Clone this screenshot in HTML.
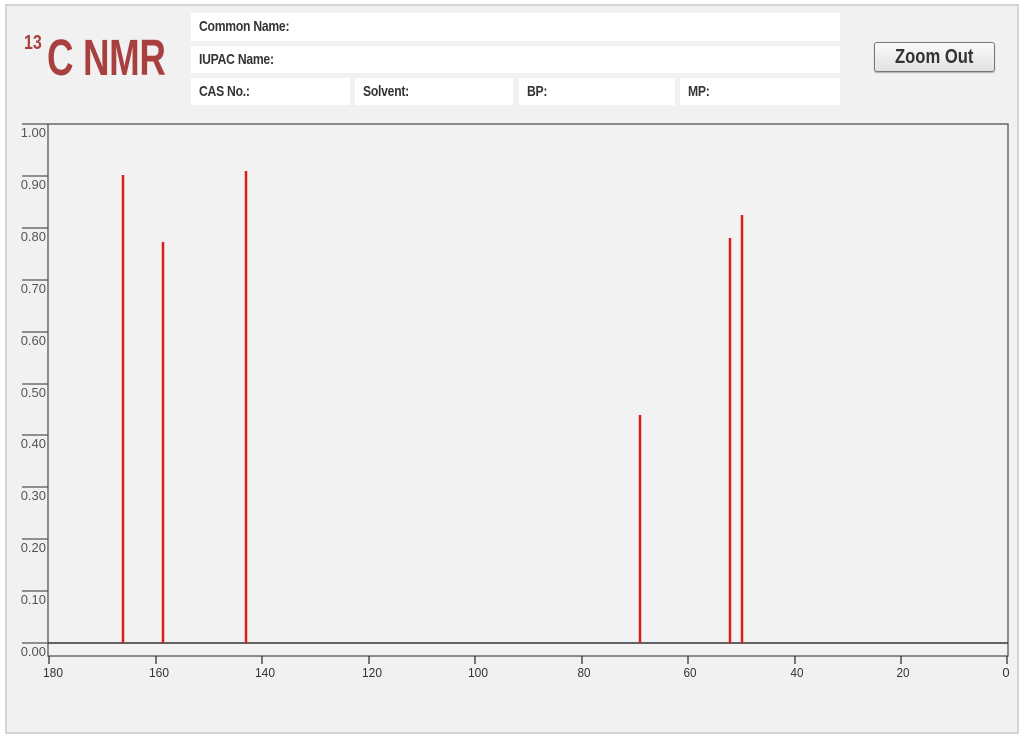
<!DOCTYPE html>
<html><head><meta charset="utf-8"><style>
body{margin:0;width:1024px;height:730px;background:#fff;overflow:hidden;position:relative;font-family:"Liberation Sans",sans-serif}
.frame{position:absolute;left:5px;top:4px;width:1014px;height:730px;background:#f1f1f1;border:2px solid #d4d4d4;box-sizing:border-box}
.f{position:absolute;background:#fff;font-size:15px;font-weight:bold;color:#333;line-height:28px;padding-left:8px;box-sizing:border-box;letter-spacing:-0.3px;white-space:nowrap}
.f span{display:inline-block;transform:scaleX(0.81);transform-origin:0 50%}
.title{position:absolute;left:47px;top:29px;color:#a8403f;font-weight:bold;font-size:51px;line-height:58px;transform:scaleX(0.72);transform-origin:0 0;white-space:nowrap;letter-spacing:-0.5px}
.sup{position:absolute;left:24px;top:32px;color:#a8403f;font-weight:bold;font-size:20px;line-height:22px;transform:scaleX(0.8);transform-origin:0 0}
.btn{position:absolute;left:874px;top:42px;width:121px;height:30px;box-sizing:border-box;border:1px solid #777;border-radius:3px;background:linear-gradient(#fafafa,#e2e2e2);font-weight:bold;font-size:20px;color:#333;text-align:center;line-height:28px;box-shadow:0 1px 1px #aaa}
.btn span{display:inline-block;transform:scaleX(0.83)}
</style></head><body>
<div class="frame"></div>
<div class="sup">13</div>
<div class="title">C NMR</div>
<div class="f" style="left:191px;top:13px;width:649px;height:28px"><span>Common Name:</span></div>
<div class="f" style="left:191px;top:46px;width:649px;height:27px"><span>IUPAC Name:</span></div>
<div class="f" style="left:191px;top:78px;width:159px;height:27px"><span>CAS No.:</span></div>
<div class="f" style="left:355px;top:78px;width:158px;height:27px"><span>Solvent:</span></div>
<div class="f" style="left:519px;top:78px;width:156px;height:27px"><span>BP:</span></div>
<div class="f" style="left:680px;top:78px;width:160px;height:27px"><span>MP:</span></div>
<div class="btn"><span>Zoom Out</span></div>
<svg style="position:absolute;left:0;top:0" width="1024" height="730" font-family="Liberation Sans, sans-serif">
<rect x="48" y="124" width="960" height="532" fill="#f2f2f2" stroke="#555" stroke-width="1.3"/>
<line x1="48" y1="643" x2="1008" y2="643" stroke="#333" stroke-width="1.5"/>
<g stroke="#555" stroke-width="1.2">
<line x1="22" y1="124" x2="48" y2="124"/><line x1="22" y1="176" x2="48" y2="176"/><line x1="22" y1="228" x2="48" y2="228"/><line x1="22" y1="280" x2="48" y2="280"/><line x1="22" y1="332" x2="48" y2="332"/><line x1="22" y1="384" x2="48" y2="384"/><line x1="22" y1="435" x2="48" y2="435"/><line x1="22" y1="487" x2="48" y2="487"/><line x1="22" y1="539" x2="48" y2="539"/><line x1="22" y1="591" x2="48" y2="591"/><line x1="22" y1="643" x2="48" y2="643"/>
</g>
<g font-size="13" fill="#555" text-anchor="end">
<text x="46" y="137">1.00</text><text x="46" y="189">0.90</text><text x="46" y="241">0.80</text><text x="46" y="293">0.70</text><text x="46" y="345">0.60</text><text x="46" y="397">0.50</text><text x="46" y="448">0.40</text><text x="46" y="500">0.30</text><text x="46" y="552">0.20</text><text x="46" y="604">0.10</text><text x="46" y="656">0.00</text>
</g>
<g stroke="#333" stroke-width="1.3">
<line x1="49" y1="656" x2="49" y2="664"/><line x1="156" y1="656" x2="156" y2="664"/><line x1="262" y1="656" x2="262" y2="664"/><line x1="369" y1="656" x2="369" y2="664"/><line x1="475" y1="656" x2="475" y2="664"/><line x1="582" y1="656" x2="582" y2="664"/><line x1="688" y1="656" x2="688" y2="664"/><line x1="795" y1="656" x2="795" y2="664"/><line x1="901" y1="656" x2="901" y2="664"/><line x1="1007" y1="656" x2="1007" y2="664"/>
</g>
<g font-size="13" fill="#333" text-anchor="middle">
<text x="53" y="677" textLength="20" lengthAdjust="spacingAndGlyphs">180</text><text x="159" y="677" textLength="20" lengthAdjust="spacingAndGlyphs">160</text><text x="265" y="677" textLength="20" lengthAdjust="spacingAndGlyphs">140</text><text x="372" y="677" textLength="20" lengthAdjust="spacingAndGlyphs">120</text><text x="478" y="677" textLength="20" lengthAdjust="spacingAndGlyphs">100</text><text x="584" y="677" textLength="13" lengthAdjust="spacingAndGlyphs">80</text><text x="690" y="677" textLength="13" lengthAdjust="spacingAndGlyphs">60</text><text x="797" y="677" textLength="13" lengthAdjust="spacingAndGlyphs">40</text><text x="903" y="677" textLength="13" lengthAdjust="spacingAndGlyphs">20</text><text x="1006" y="677">0</text>
</g>
<g stroke="#d91c1c" stroke-width="2.5">
<line x1="123" y1="175" x2="123" y2="643"/><line x1="163" y1="242" x2="163" y2="643"/><line x1="246" y1="171" x2="246" y2="643"/><line x1="640" y1="415" x2="640" y2="643"/><line x1="730" y1="238" x2="730" y2="643"/><line x1="742" y1="215" x2="742" y2="643"/>
</g>
</svg>
</body></html>
